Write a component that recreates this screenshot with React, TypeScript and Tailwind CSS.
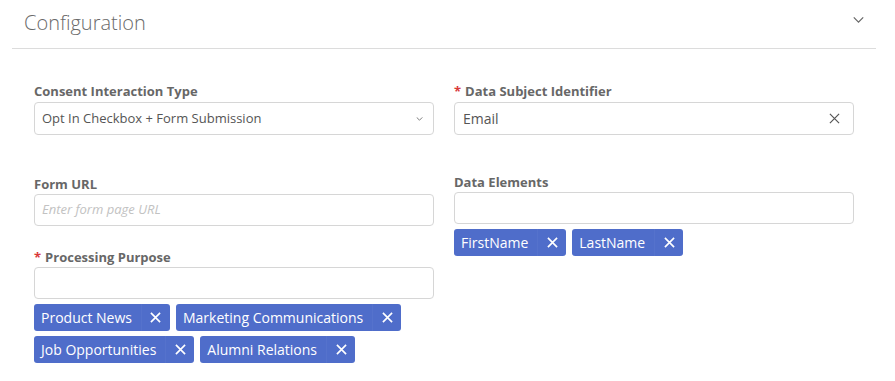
import React from "react";

const font = { fontFamily: '"Open Sans", "Liberation Sans", sans-serif' };

function XIcon({ className, stroke = 2 }: { className?: string; stroke?: number }) {
  return (
    <svg viewBox="0 0 12 12" className={className} fill="none" stroke="currentColor" strokeWidth={stroke} strokeLinecap="butt">
      <path d="M1 1 L11 11 M11 1 L1 11" />
    </svg>
  );
}

function Tag({ label }: { label: string }) {
  return (
    <div className="flex h-[27px] items-stretch rounded-[3px] bg-[#4f6dca] text-white">
      <span className="flex items-center pl-[7px] pr-[9px] text-[14px] leading-none">{label}</span>
      <span className="flex w-[29px] items-center justify-center border-l border-[#5572cc]">
        <XIcon className="h-[11px] w-[11px]" stroke={1.8} />
      </span>
    </div>
  );
}

function Label({ text, required }: { text: string; required?: boolean }) {
  return (
    <div className="text-[13px] font-bold leading-[18px] text-[#676767]">
      {required && <span className="mr-[4px] text-[#d93a3a]">*</span>}
      {text}
    </div>
  );
}

export default function App() {
  return (
    <div className="w-[895px] h-[381px] bg-white" style={font}>
      <div className="mx-3 w-[864px]">
        <div className="flex h-[49px] items-start justify-between border-b border-[#dcdcdc] pl-3 pr-[12px] pt-[9px]">
          <h2 className="text-[20px] font-light leading-[28px] text-[#6a6a6a]">Configuration</h2>
          <svg viewBox="0 0 12 7" className="mt-[8px] h-[6px] w-[11px] text-[#666]" fill="none" stroke="currentColor" strokeWidth="1.4">
            <path d="M0.5 0.5 L6 6 L11.5 0.5" />
          </svg>
        </div>
        <div className="grid grid-cols-2 gap-x-[20px] pl-[22px] pr-[22px] pt-[33px]">
          <div className="flex flex-col">
            <Label text="Consent Interaction Type" />
            <div className="mt-[2px] flex h-[33px] items-center justify-between rounded-[4px] border border-[#d6d6d6] pl-[7px] pr-[10px] text-[13px] text-[#555]">
              <span>Opt In Checkbox + Form Submission</span>
              <svg viewBox="0 0 8 5" className="h-[4px] w-[7px] text-[#777]" fill="none" stroke="currentColor" strokeWidth="1.2">
                <path d="M0.5 0.5 L4 4 L7.5 0.5" />
              </svg>
            </div>
            <div className="mt-[40px]">
              <Label text="Form URL" />
            </div>
            <div className="mt-[1px] flex h-[32px] items-center rounded-[4px] border border-[#d6d6d6] pl-[7px] text-[13px] italic text-[#c2c2c2]">
              Enter form page URL
            </div>
            <div className="mt-[22px]">
              <Label text="Processing Purpose" required />
            </div>
            <div className="mt-[1px] h-[32px] rounded-[4px] border border-[#d6d6d6]" />
            <div className="mt-[5px] flex flex-wrap gap-x-[6px] gap-y-[5px]">
              <Tag label="Product News" />
              <Tag label="Marketing Communications" />
              <Tag label="Job Opportunities" />
              <Tag label="Alumni Relations" />
            </div>
          </div>
          <div className="flex flex-col">
            <Label text="Data Subject Identifier" required />
            <div className="mt-[2px] flex h-[33px] items-center justify-between rounded-[4px] border border-[#d6d6d6] pl-[8px] pr-[13px] text-[14px] text-[#555]">
              <span>Email</span>
              <XIcon className="h-[11px] w-[11px] text-[#555]" stroke={1.3} />
            </div>
            <div className="mt-[38px]">
              <Label text="Data Elements" />
            </div>
            <div className="mt-[1px] h-[32px] rounded-[4px] border border-[#d6d6d6]" />
            <div className="mt-[5px] flex flex-wrap gap-x-[6px] gap-y-[5px]">
              <Tag label="FirstName" />
              <Tag label="LastName" />
            </div>
          </div>
        </div>
      </div>
    </div>
  );
}
